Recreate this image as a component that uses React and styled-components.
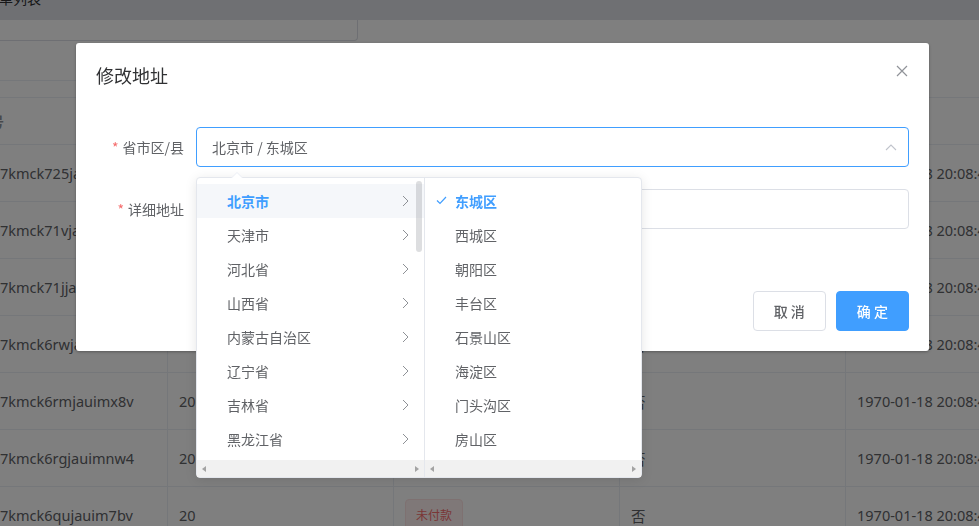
import React from "react";
import styled, { createGlobalStyle } from "styled-components";

const GlobalStyle = createGlobalStyle`
  html, body {
    margin: 0;
    padding: 0;
    overflow: hidden;
    background: #fff;
  }
  body {
    font-family: "Noto Sans", "Noto Sans CJK SC", sans-serif;
    color: #606266;
  }
  * {
    box-sizing: border-box;
  }
`;

const orders = [
  { id: "7kmck725jauim3qc", num: "20", time: "1970-01-18 20:08:43" },
  { id: "7kmck71vjauimq2x", num: "20", time: "1970-01-18 20:08:43" },
  { id: "7kmck71jjauim9ds", num: "20", time: "1970-01-18 20:08:43" },
  { id: "7kmck6rwjauimb5k", num: "20", time: "1970-01-18 20:08:43" },
  { id: "7kmck6rmjauimx8v", num: "20", time: "1970-01-18 20:08:43" },
  { id: "7kmck6rgjauimnw4", num: "20", time: "1970-01-18 20:08:43" },
  { id: "7kmck6qujauim7bv", num: "20", time: "1970-01-18 20:08:43" },
];

const provinces = [
  "北京市",
  "天津市",
  "河北省",
  "山西省",
  "内蒙古自治区",
  "辽宁省",
  "吉林省",
  "黑龙江省",
  "上海市",
];

const districts = [
  "东城区",
  "西城区",
  "朝阳区",
  "丰台区",
  "石景山区",
  "海淀区",
  "门头沟区",
  "房山区",
  "通州区",
];

const ArrowRight = () => (
  <svg width="7" height="12" viewBox="0 0 7 12" fill="none">
    <path d="M1 1l5 5-5 5" stroke="#8e9196" strokeWidth="1" />
  </svg>
);

const Check = () => (
  <svg width="11" height="9" viewBox="0 0 11 9" fill="none">
    <path d="M1 4.5l3 3L10 1" stroke="#409eff" strokeWidth="1.2" />
  </svg>
);

const ArrowUp = () => (
  <svg width="12" height="7" viewBox="0 0 12 7" fill="none">
    <path d="M1 6l5-5 5 5" stroke="#c0c4cc" strokeWidth="1.1" />
  </svg>
);

const CloseIcon = () => (
  <svg width="12" height="12" viewBox="0 0 12 12" fill="none">
    <path d="M1 1l10 10M11 1L1 11" stroke="#909399" strokeWidth="1.2" />
  </svg>
);

const App = () => {
  return (
    <>
      <GlobalStyle />
      <Page>
        <TopBar>
          <TopBarTitle>订单列表</TopBarTitle>
        </TopBar>
        <SearchRow>
          <SearchInput />
        </SearchRow>
        <Table>
          <HeadCell first>订单号</HeadCell>
          <HeadCell>数量</HeadCell>
          <HeadCell>状态</HeadCell>
          <HeadCell>是否发货</HeadCell>
          <HeadCell>创建时间</HeadCell>
          {orders.map((order) => (
            <React.Fragment key={order.id}>
              <Cell first>{order.id}</Cell>
              <Cell>{order.num}</Cell>
              <Cell>
                <Tag>未付款</Tag>
              </Cell>
              <Cell>否</Cell>
              <Cell>{order.time}</Cell>
            </React.Fragment>
          ))}
        </Table>
      </Page>

      <Overlay />

      <Dialog>
        <DialogHeader>
          <DialogTitle>修改地址</DialogTitle>
          <CloseButton>
            <CloseIcon />
          </CloseButton>
        </DialogHeader>
        <DialogBody>
          <FormItem>
            <Label>省市区/县</Label>
            <Field>
              <Input focused>
                <InputText>北京市 / 东城区</InputText>
                <ArrowUp />
              </Input>
              <Dropdown>
                <PopperArrow />
                <Menu width={228} divider>
                  <MenuList>
                    {provinces.map((name, i) => (
                      <Node key={name} active={i === 0} highlight={i === 0}>
                        {name}
                        <NodeArrow>
                          <ArrowRight />
                        </NodeArrow>
                      </Node>
                    ))}
                  </MenuList>
                  <Thumb />
                  <HScroll>
                    <ScrollArrow dir="left" />
                    <ScrollArrow dir="right" />
                  </HScroll>
                </Menu>
                <Menu width={216}>
                  <MenuList>
                    {districts.map((name, i) => (
                      <Node key={name} active={i === 0}>
                        {i === 0 && (
                          <NodeCheck>
                            <Check />
                          </NodeCheck>
                        )}
                        {name}
                      </Node>
                    ))}
                  </MenuList>
                  <HScroll>
                    <ScrollArrow dir="left" />
                    <ScrollArrow dir="right" />
                  </HScroll>
                </Menu>
              </Dropdown>
            </Field>
          </FormItem>
          <FormItem>
            <Label>详细地址</Label>
            <Field>
              <Input />
            </Field>
          </FormItem>
        </DialogBody>
        <DialogFooter>
          <Button>取 消</Button>
          <Button primary>确 定</Button>
        </DialogFooter>
      </Dialog>
    </>
  );
};

const Page = styled.div`
  width: 979px;
  height: 526px;
  overflow: hidden;
`;
const TopBar = styled.div`
  height: 20px;
  background: #dee0e6;
  overflow: hidden;
`;
const TopBarTitle = styled.div`
  margin-top: -11px;
  margin-left: -15px;
  font-size: 14px;
  line-height: 20px;
  color: #303133;
`;
const SearchRow = styled.div`
  width: 900px;
  height: 61px;
  border-bottom: 1px solid #ebeef5;
`;
const SearchInput = styled.div`
  width: 400px;
  height: 21px;
  margin-left: -42px;
  border: 1px solid #dcdfe6;
  border-top: none;
  border-radius: 0 0 4px 4px;
`;
const Table = styled.div`
  margin-top: 16px;
  display: grid;
  grid-template-columns: 168px 226px 226px 226px 300px;
  grid-template-rows: 47px;
  grid-auto-rows: 57px;
  border-top: 1px solid #ebeef5;
  font-size: 14.5px;
  color: #606266;
`;
const Cell = styled.div`
  display: flex;
  align-items: center;
  padding: 0 10px 0 ${(p) => (p.first ? "0" : "11px")};
  border-right: 1px solid #ebeef5;
  border-bottom: 1px solid #ebeef5;
  white-space: nowrap;
  overflow: hidden;
`;
const HeadCell = styled(Cell)`
  color: #909399;
  font-weight: bold;
  font-size: 14px;
  text-indent: ${(p) => (p.first ? "-38px" : "0")};
`;
const Tag = styled.span`
  display: inline-flex;
  align-items: center;
  height: 32px;
  padding: 0 10px;
  font-size: 12px;
  color: #f56c6c;
  background: #fef0f0;
  border: 1px solid #fde2e2;
  border-radius: 4px;
`;
const Overlay = styled.div`
  position: fixed;
  inset: 0;
  background: rgba(0, 0, 0, 0.5);
  z-index: 10;
`;
const Dialog = styled.div`
  position: absolute;
  top: 43px;
  left: 76px;
  width: 853px;
  background: #fff;
  border-radius: 3px;
  box-shadow: 0 1px 3px rgba(0, 0, 0, 0.3);
  z-index: 11;
  font-family: "Noto Sans CJK SC", "Noto Sans", sans-serif;
`;
const DialogHeader = styled.div`
  display: flex;
  justify-content: space-between;
  align-items: center;
  padding: 20px 20px 10px;
`;
const DialogTitle = styled.span`
  font-size: 18px;
  line-height: 24px;
  color: #303133;
`;
const CloseButton = styled.span`
  display: flex;
  margin-top: -8px;
  margin-right: 1px;
`;
const DialogBody = styled.div`
  padding: 30px 20px;
`;
const FormItem = styled.div`
  display: flex;
  margin-bottom: 22px;
`;
const Label = styled.label`
  width: 100px;
  padding-right: 12px;
  text-align: right;
  font-size: 14px;
  line-height: 40px;
  color: #606266;
  &::before {
    content: "*";
    color: #f56c6c;
    margin-right: 4px;
  }
`;
const Field = styled.div`
  position: relative;
  flex: 1;
`;
const Input = styled.div`
  display: flex;
  align-items: center;
  justify-content: space-between;
  height: 40px;
  padding: 0 11px 0 15px;
  border: 1px solid ${(p) => (p.focused ? "#409eff" : "#dcdfe6")};
  border-radius: 4px;
  font-size: 14px;
  color: #606266;
`;
const InputText = styled.span``;
const Dropdown = styled.div`
  position: absolute;
  top: 50px;
  left: 0;
  display: flex;
  background: #fff;
  border: 1px solid #e4e7ed;
  border-radius: 4px;
  box-shadow: 0 2px 12px 0 rgba(0, 0, 0, 0.1);
  z-index: 12;
`;
const PopperArrow = styled.span`
  position: absolute;
  top: -6px;
  left: 34px;
  width: 0;
  height: 0;
  border-left: 6px solid transparent;
  border-right: 6px solid transparent;
  border-bottom: 6px solid #ebeef5;
  &::after {
    content: "";
    position: absolute;
    top: 1px;
    left: -6px;
    border-left: 6px solid transparent;
    border-right: 6px solid transparent;
    border-bottom: 6px solid #fff;
  }
`;
const Menu = styled.div`
  position: relative;
  width: ${(p) => p.width}px;
  display: flex;
  flex-direction: column;
  border-right: ${(p) => (p.divider ? "1px solid #e4e7ed" : "none")};
  overflow: hidden;
`;
const MenuList = styled.div`
  height: 282px;
  padding: 6px 0;
  overflow: hidden;
`;
const Node = styled.div`
  position: relative;
  height: 34px;
  line-height: 34px;
  padding: 0 30px 0 30px;
  font-size: 14px;
  white-space: nowrap;
  color: ${(p) => (p.active ? "#409eff" : "#606266")};
  font-weight: ${(p) => (p.active ? "bold" : "normal")};
  background: ${(p) => (p.highlight ? "#f5f7fa" : "transparent")};
`;
const NodeArrow = styled.span`
  position: absolute;
  right: 15px;
  top: 11px;
  display: flex;
`;
const NodeCheck = styled.span`
  position: absolute;
  left: 11px;
  top: 12px;
  display: flex;
`;
const Thumb = styled.span`
  position: absolute;
  top: 3px;
  right: 2px;
  width: 6px;
  height: 71px;
  border-radius: 3px;
  background: rgba(144, 147, 153, 0.3);
`;
const HScroll = styled.div`
  height: 17px;
  display: flex;
  align-items: center;
  justify-content: space-between;
  padding: 0 5px;
  background: #f1f1f1;
`;
const ScrollArrow = styled.span`
  width: 0;
  height: 0;
  border-top: 3.5px solid transparent;
  border-bottom: 3.5px solid transparent;
  ${(p) =>
    p.dir === "left"
      ? "border-right: 4px solid #a3a3a3;"
      : "border-left: 4px solid #a3a3a3;"}
`;
const DialogFooter = styled.div`
  display: flex;
  justify-content: flex-end;
  gap: 10px;
  padding: 10px 20px 20px;
`;
const Button = styled.button`
  height: 40px;
  padding: 0 20px;
  font-family: "Noto Sans CJK SC", sans-serif;
  font-size: 14px;
  font-weight: 500;
  border-radius: 4px;
  border: 1px solid ${(p) => (p.primary ? "#409eff" : "#dcdfe6")};
  background: ${(p) => (p.primary ? "#409eff" : "#fff")};
  color: ${(p) => (p.primary ? "#fff" : "#606266")};
`;

export default App;
